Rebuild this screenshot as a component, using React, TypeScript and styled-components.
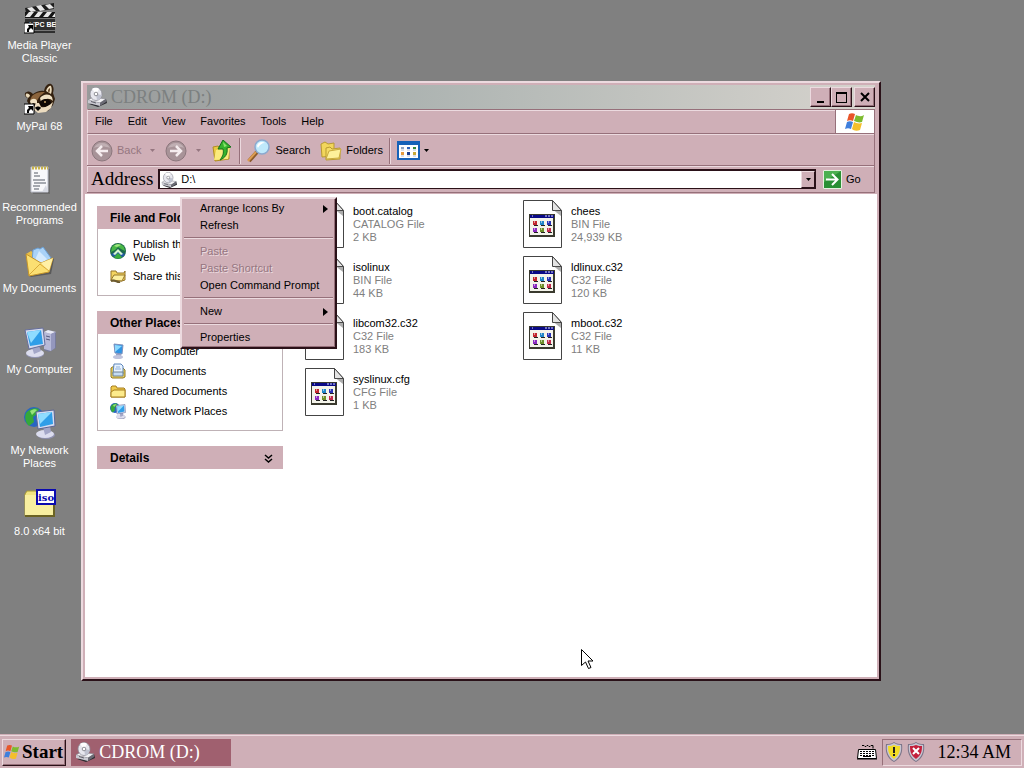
import type { ReactNode } from 'react';
import styled, { createGlobalStyle } from 'styled-components';

const GlobalStyle = createGlobalStyle`
  :root {
    --face: #cfafb7;
    --face-light: #ecdadf;
    --face-shadow: #96707a;
    --face-dark: #2a1118;
    --text-disabled: #957680;
    --ui-font: 'Liberation Sans', Arial, sans-serif;
    --serif-font: 'Liberation Serif', 'Times New Roman', serif;
  }

  * {
    box-sizing: border-box;
  }

  body {
    margin: 0;
    background-color: #808080;
    color: #000;
    font-family: var(--ui-font);
    font-size: 11px;
    line-height: 13px;
  }

  button,
  input {
    font: inherit;
    color: inherit;
    margin: 0;
    padding: 0;
    border: 0;
    background: none;
  }

  a {
    color: inherit;
    text-decoration: none;
  }

  ul {
    list-style: none;
    margin: 0;
    padding: 0;
  }

  svg {
    display: block;
    flex-shrink: 0;
  }
`;

/* ---------- Icons ---------- */

const ShortcutArrow = () => (
  <g>
    <path d="M0 21h10v10H0z" fill="#fff" stroke="#000" strokeWidth="1" />
    <path d="M4 23h5v5l-2-2-2 2v2H3v-3l2-2z" fill="#000" />
  </g>
);

const MediaPlayerIcon = () => (
  <svg width="32" height="32" viewBox="0 0 32 32" aria-hidden="true">
    <path d="M1 6 30 1v6L2 11z" fill="#1c1c1c" />
    <path d="m3 6 5-1 4 4-5 1zM12 4l5-1 4 5-5 1zM21 3l5-1 4 4-5 1z" fill="#e6e6e6" />
    <path d="M1 10h30v21H1z" fill="#2f2f2f" />
    <path d="M1 10h30v6H1z" fill="#151515" />
    <path d="m5 10-4 5h5l4-5zM14 10l-4 5h5l4-5zM23 10l-4 5h5l4-5zM31 11l-3 4h3z" fill="#e6e6e6" />
    <path d="M1 16.500h30M1 28.500h30" stroke="#777" />
    <text x="5" y="25" fontSize="7" fontWeight="700" fill="#fff" fontFamily="Liberation Sans">
      MPC BE
    </text>
    <ShortcutArrow />
  </svg>
);

const RaccoonIcon = () => (
  <svg width="32" height="32" viewBox="0 0 32 32" aria-hidden="true">
    <path d="M20 8c1-5 4-8 7-7 3 2 3 6 2 9l2 6-2 6-5 6-8 1-8-2-5-9 1-3c-4-1-4-6-1-6 2-1 4 0 6 2 3-2 7-4 11-3z" fill="#34210f" />
    <path d="M22 8c1-4 4-6 5-5 1 2 1 5 0 8zM2 11c1-1 4 0 4 2l-2 2c-2-1-3-3-2-4z" fill="#e9dabb" />
    <path d="M24 8c0-2 2-3 2-3s0 3-1 5z" fill="#5c3c1d" />
    <path d="M8 13c4-4 9-4 13-4l-5 4-4 6-6-2z" fill="#8b643c" />
    <path d="M16 15c3-4 9-5 12-1l1 4c-3-3-8-3-12 1zM6 18c2-3 6-3 7 0v3c-2-1-5-1-6 1z" fill="#efe1c4" />
    <path d="M15 20c3-5 10-5 12-1 0 4-6 6-10 4zM7 22c1-2 4-2 5 0l-1 2H8z" fill="#0e0805" />
    <path d="M12 20h3l2 4c4 1 8-1 12-5l-2 6-5 4-8 1-5-4z" fill="#ecdcc0" />
    <circle cx="21" cy="19" r="1" fill="#c7a066" />
    <path d="M11 25c1-2 5-2 6 0l-3 3z" fill="#000" />
    <ShortcutArrow />
  </svg>
);

const NotepadIcon = () => (
  <svg width="32" height="32" viewBox="0 0 32 32" aria-hidden="true">
    <path d="M9 5h17v25H9z" fill="#555" opacity=".5" />
    <path d="M7 3h17v25H7z" fill="#f8f8fb" stroke="#b9bcc8" />
    <path d="M8 4h16" stroke="#c9b44e" strokeWidth="3" strokeDasharray="2 1" />
    <path d="M10 9h4M10 12h6M9 16h12M10 19h12M9 22h7M10 25h5" stroke="#555a66" />
    <path d="M22 21l2 7h-6z" fill="#d7d9e2" />
  </svg>
);

const DocumentsIcon = () => (
  <svg width="32" height="32" viewBox="0 0 32 32" aria-hidden="true">
    <path d="m5 31 20-4 4-14 1 1-3 15-20 3z" fill="#333" opacity=".5" />
    <path d="M2 9l5-3 3 2 4 6-9 14z" fill="#e8bd47" />
    <path d="m9 5 5-2 2 1 3-2 8 11-7 10-12-6z" fill="#a9d2f7" stroke="#6b9fd4" />
    <path d="m15 6 8 8-6 6-6-5z" fill="#d4eafd" />
    <path d="M2 9l15 9 12-5-4 14-20 4z" fill="#fbdf72" stroke="#c4942a" />
    <path d="m17 18 12-5-4 13z" fill="#fff0a6" />
    <path d="m5 30 11-11 9 7" fill="none" stroke="#d9aa3a" />
  </svg>
);

type ComputerIconProps = {
  size?: number;
};

const ComputerIcon = ({ size = 32 }: ComputerIconProps) => (
  <svg width={size} height={size} viewBox="0 0 32 32" aria-hidden="true">
    <path d="m20 6 4-2 8 2v16l-7 4-5-2z" fill="#777b9a" />
    <path d="m20 6 7 2v17l-7-2z" fill="#b7bad8" />
    <path d="m20 6 4-2 8 2-5 2z" fill="#e9eaf6" />
    <path d="m27 8 4-2v16l-4 3z" fill="#9497bd" />
    <path d="M22 10l4 1M22 13l4 1" stroke="#555a80" />
    <ellipse cx="11" cy="28" rx="9" ry="4" fill="#9395b4" />
    <ellipse cx="11" cy="27" rx="9" ry="4" fill="#dcddee" />
    <path d="m8 21 7-1 2 5-7 3z" fill="#a4a7c8" />
    <path d="m1 4 18-2 2 17L5 23z" fill="#d6dcf0" stroke="#666e9c" />
    <path d="m3 6 14-2 2 14L6 20z" fill="#2f9ee8" />
    <path d="m3 6 14-2-10 13z" fill="#8fdcff" />
  </svg>
);

const NetworkIcon = ({ size = 32 }: ComputerIconProps) => (
  <svg width={size} height={size} viewBox="0 0 32 32" aria-hidden="true">
    <circle cx="10" cy="10" r="10" fill="#2765c4" />
    <path d="M2 6c3-4 9-6 13-4l-2 5-4 3 1 5-5 4c-3-3-5-8-3-13z" fill="#35a83a" />
    <path d="M6 4c3-2 6-2 7-1L8 8z" fill="#96e27a" />
    <ellipse cx="22" cy="28" rx="9" ry="4" fill="#8f91b0" />
    <ellipse cx="21" cy="27" rx="9" ry="4" fill="#dcddee" />
    <path d="m19 20 7-1 1 6-6 3z" fill="#a4a7c8" />
    <path d="m12 5 18-2 1 16-17 3z" fill="#d6dcf0" stroke="#5d6594" />
    <path d="m14 7 14-2 1 12-13 3z" fill="#2f9ee8" />
    <path d="m14 7 14-2-12 12z" fill="#8fdcff" />
  </svg>
);

const IsoIcon = () => (
  <svg width="32" height="32" viewBox="0 0 32 32" aria-hidden="true">
    <path d="M1 6 3 3h9l2 3h16v22H1z" fill="#f1e481" stroke="#a79a37" />
    <path d="M1 7h28v20H1z" fill="#f8efa0" />
    <path d="M1 28h29V10" fill="none" stroke="#6b6323" strokeWidth="2" />
    <path d="M13 2h18v14H13z" fill="#fff" stroke="#0a0ab0" strokeWidth="2" />
    <text x="14" y="13" fontSize="10" fontWeight="700" fill="#0a0ab0" fontFamily="DejaVu Serif">
      iso
    </text>
  </svg>
);

const DriveIcon = ({ size = 20 }: ComputerIconProps) => (
  <svg width={size} height={size} viewBox="0 0 20 20" aria-hidden="true">
    <path d="m2 17 9 3 9-4-1-4z" fill="#2b2b30" />
    <path d="m1 13 5-3 13 2-6 4z" fill="#f2f2f5" stroke="#8b8b94" strokeWidth=".7" />
    <path d="m1 13 12 3v3L1 16z" fill="#c9c9d1" />
    <path d="m13 16 6-4v3l-6 4z" fill="#6a6a74" />
    <ellipse cx="9" cy="7" rx="6" ry="6.5" fill="#e7e7ee" stroke="#8d8d98" strokeWidth=".8" />
    <path d="M9 7 5 2c3-2 6-1 7 0z" fill="#fff" />
    <path d="m9 7 6 1c-1 3-3 5-5 5z" fill="#bfc2d0" />
    <circle cx="9" cy="7" r="1.8" fill="#fff" stroke="#77777f" strokeWidth=".8" />
    <path d="M4 14.500l5 1.500" stroke="#5f5f68" />
  </svg>
);

type RoundArrowProps = {
  flipped?: boolean;
};

const RoundArrowIcon = ({ flipped }: RoundArrowProps) => (
  <svg width="22" height="22" viewBox="0 0 22 22" aria-hidden="true">
    <circle cx="11" cy="11" r="10" fill="#a89398" stroke="#8c777d" />
    <path d="M3 8a9 9 0 0 1 16 0c-5-2-11-2-16 0z" fill="#c0afb3" />
    <path
      d={flipped ? 'M5 11h11M11 6l5 5-5 5' : 'M17 11H6M11 6l-5 5 5 5'}
      fill="none"
      stroke="#f5ecee"
      strokeWidth="2.500"
    />
  </svg>
);

const UpFolderIcon = () => (
  <svg width="22" height="22" viewBox="0 0 22 22" aria-hidden="true">
    <path d="m2 7 5-1 2 2 9-1v12L4 21z" fill="#e9c841" stroke="#b08e22" />
    <path d="m3 20 2-10 14-3-2 12z" fill="#fbea7d" />
    <path d="m12 0 8 7-4 1c1 6-2 10-7 12 3-4 4-7 3-11L7 9z" fill="#36b32d" stroke="#16701a" />
    <path d="m12 2 4 4-3 1z" fill="#8ce56f" />
  </svg>
);

const SearchIcon = () => (
  <svg width="24" height="24" viewBox="0 0 24 24" aria-hidden="true">
    <path d="m2 22 8-9" stroke="#8b5a2a" strokeWidth="4" />
    <path d="m1 22 8-9" stroke="#dc9c52" strokeWidth="2" />
    <circle cx="15" cy="8" r="7" fill="#bfe9fb" stroke="#8ba9cf" strokeWidth="1.500" />
    <path d="M10 7c1-4 5-5 8-3-3 0-6 2-7 5z" fill="#fff" />
  </svg>
);

const FoldersIcon = () => (
  <svg width="22" height="20" viewBox="0 0 22 20" aria-hidden="true">
    <path d="M1 3 5 1l3 2 6-1v13L2 16z" fill="#f2d65c" stroke="#b99a32" />
    <path d="m6 7 4-1 2 2 8-1v11L6 19z" fill="#f5dc66" stroke="#b99a32" />
    <path d="m6 18 3-8 12-2-2 9z" fill="#fdf09a" stroke="#c9aa3e" />
  </svg>
);

const ViewsIcon = () => (
  <svg width="23" height="19" viewBox="0 0 23 19" aria-hidden="true">
    <path d="M0 0h23v19H0z" fill="#1662b8" />
    <path d="M2 4h19v13H2z" fill="#fff" />
    <path d="M4 6h3v2H4z" fill="#8fa3c0" />
    <path d="M10 6h3v2h-3z" fill="#2c62bb" />
    <path d="M16 6h3v2h-3z" fill="#368a39" />
    <path d="M4 11h3v3H4z" fill="#e59a3c" />
    <path d="M10 11h3v3h-3z" fill="#1c3f91" />
    <path d="M16 11h3v3h-3z" fill="#c8a93a" />
    <path d="M4 9h3M10 9h3M16 9h3M4 15h3M10 15h3M16 15h3" stroke="#b7c2d6" />
  </svg>
);

const GoIcon = () => (
  <svg width="19" height="19" viewBox="0 0 19 19" aria-hidden="true">
    <path d="M1 0h17l1 1v17l-1 1H1l-1-1V1z" fill="#e5f2df" />
    <path d="M1 1h17v17H1z" fill="#2a8f35" />
    <path d="M1 1h17L1 12z" fill="#4bb050" />
    <path d="M3 9.500h11M9 4l5.500 5.500L9 15" fill="none" stroke="#fff" strokeWidth="2" />
  </svg>
);

const FlagIcon = ({ size = 20 }: ComputerIconProps) => (
  <svg width={size} height={size} viewBox="0 0 20 20" aria-hidden="true">
    <path d="M4 2c2-1 4-1 6 0L8 9C6 8 4 8 2 9z" fill="#e8562a" />
    <path d="M11 3c2 1 5 2 8 0l-2 7c-3 1-5 0-8-1z" fill="#7dbb2f" />
    <path d="M2 10c2-1 4-1 6 0l-2 7c-2-1-4-1-6 0z" fill="#3f7fdc" />
    <path d="M9 10c2 1 5 2 8 1l-2 7c-3 1-6 1-8-1z" fill="#f4bf2b" />
  </svg>
);

const GlobeIcon = () => (
  <svg width="16" height="16" viewBox="0 0 16 16" aria-hidden="true">
    <circle cx="8" cy="8" r="8" fill="#1d6b4a" />
    <path d="M2 4c3-4 9-4 12 0l1 4-4-2-3-2-3 3-4 2z" fill="#49b846" />
    <path d="M4 3c2-2 5-2 7-1L7 4z" fill="#a2e67f" />
    <path d="M1 11c2 4 11 6 14 0l-7-3z" fill="#2357a8" />
    <path d="m8 6 5 5-2 1-3-3-3 3-2-1z" fill="#d9f7cf" />
    <path d="m8 10 4 4c-2 2-6 2-8 0z" fill="#38ad3c" />
  </svg>
);

const SharedFolderIcon = () => (
  <svg width="16" height="16" viewBox="0 0 16 16" aria-hidden="true">
    <path d="M1 3h5l1 2h7l1-2v9l-3 1H1z" fill="#f4d560" stroke="#96762a" />
    <path d="m1 12 3-5h11l-3 6z" fill="#fdf0a0" stroke="#96762a" />
    <path d="M1 13c4-2 6 2 9 1" fill="none" stroke="#6b5a30" strokeWidth="2" />
  </svg>
);

const PaperFolderIcon = () => (
  <svg width="16" height="16" viewBox="0 0 16 16" aria-hidden="true">
    <path d="m1 5 3-2 8 1 3 3v7l-2 1H2l-1-1z" fill="#ecd25e" stroke="#927a26" />
    <path d="M4 1h7l2 2v8H3z" fill="#eaf4ff" stroke="#5d86bb" />
    <path d="M6 4h4M5 6h6" stroke="#8fb1da" />
    <path d="M3 9h10v4H3z" fill="#c4dcf3" stroke="#6f8294" />
  </svg>
);

const FolderIcon = () => (
  <svg width="16" height="16" viewBox="0 0 16 16" aria-hidden="true">
    <path d="M1 4l1-1h4l1 2h7l1 1v8H1z" fill="#f0cb4c" stroke="#a77f20" />
    <path d="M1 14V9l3-2h11v7z" fill="#fdeb8c" stroke="#a77f20" />
  </svg>
);

const MonitorIcon = () => (
  <svg width="16" height="16" viewBox="0 0 16 16" aria-hidden="true">
    <path d="m4 1 9 1-1 9-7-1z" fill="#2f94e3" stroke="#7f91bd" />
    <path d="m5 2 7 1-7 6z" fill="#8bd9ff" />
    <path d="M6 11h5v2H6z" fill="#9ca1c4" />
    <ellipse cx="8" cy="14" rx="5" ry="2" fill="#bfc3dc" />
  </svg>
);

const FileIcon = () => (
  <svg width="39" height="48" viewBox="0 0 39 48" aria-hidden="true">
    <path d="M.5.5h29l9 10v37H.5z" fill="#fff" stroke="#444" />
    <path d="M29.500.5v10h9z" fill="#e4e4e4" stroke="#444" />
    <path d="m31 10.500 7 .5v5z" fill="#777" opacity=".6" />
    <path d="M6 14h26v23H6z" fill="#3a3a2e" />
    <path d="M7 15h24v3H7z" fill="#0a0a86" />
    <path d="M9 16h1M22 16h2M25 16h2M28 16h2" stroke="#dfe2ff" />
    <path d="M7 18h23v17H7z" fill="#f4f4ea" />
    <path d="M10 21h4v4h-4z" fill="#c2262d" />
    <path d="M17 21h4v4h-4z" fill="#1f86c9" />
    <path d="M24 21h4v4h-4z" fill="#2a35b8" />
    <path d="M10 28h4v4h-4z" fill="#8a2ac0" />
    <path d="M17 28h4v4h-4z" fill="#6c8f2a" />
    <path d="M24 28h4v4h-4z" fill="#c22a4a" />
    <path d="M11 25.500h4M18 25.500h4M25 25.500h4M11 32.500h4M18 32.500h4M25 32.500h4" stroke="#222" />
    <path d="M11 22h1M18 22h1M25 22h1M11 29h1M18 29h1M25 29h1" stroke="#fff" />
  </svg>
);

type ShieldIconProps = {
  alert?: boolean;
};

const ShieldIcon = ({ alert }: ShieldIconProps) => (
  <svg width="18" height="20" viewBox="0 0 18 20" aria-hidden="true">
    <path d="M9 0c3 2 5 2 8 2 1 8-1 14-8 18C2 16 0 10 1 2c3 0 5 0 8-2z" fill="#7b7488" />
    <path d="M9 1c2 1 4 2 7 2 1 6-1 12-7 16C3 15 1 9 2 3c3 0 5-1 7-2z" fill="#c9c6d2" />
    <path d="M9 3c2 1 4 1 6 1 0 6-1 9-6 13-5-4-6-7-6-13 2 0 4 0 6-1z" fill={alert ? '#c3203c' : '#f2dc25'} />
    {alert ? (
      <path d="m6 6 6 6M12 6l-6 6" stroke="#fff" strokeWidth="2" />
    ) : (
      <path d="M9 5v6M9 12v2" stroke="#222" strokeWidth="2" />
    )}
  </svg>
);

const KeyboardIcon = () => (
  <svg width="20" height="16" viewBox="0 0 20 16" aria-hidden="true">
    <path d="M5 1.500h2l1 1h1l1-1h1l1 1h1l1-1h2v3" fill="none" stroke="#000" />
    <path d="M1.500 5.500h17l1 9H.5z" fill="#fff" stroke="#000" />
    <path d="M3 7.500h14M3 9.500h14M3 11.500h14" stroke="#000" strokeDasharray="2 1" />
    <path d="M6 12.500h8M0 15h20" stroke="#000" />
  </svg>
);

const ChevronsIcon = () => (
  <svg width="9" height="9" viewBox="0 0 9 9" aria-hidden="true">
    <path d="m1 1 3.500 3L8 1M1 5l3.500 3L8 5" fill="none" stroke="#000" strokeWidth="1.500" />
  </svg>
);

const SubmenuArrow = () => (
  <svg width="5" height="8" viewBox="0 0 5 8" aria-hidden="true">
    <path d="M0 0v8l5-4z" fill="#000" />
  </svg>
);

const DownArrow = () => (
  <svg width="5" height="3" viewBox="0 0 5 3" aria-hidden="true">
    <path d="M0 0h5L2.500 3z" fill="currentColor" />
  </svg>
);

/* ---------- Data ---------- */

const shortcuts: { label: string; icon: ReactNode }[] = [
  { label: 'Media Player Classic', icon: <MediaPlayerIcon /> },
  { label: 'MyPal 68', icon: <RaccoonIcon /> },
  { label: 'Recommended Programs', icon: <NotepadIcon /> },
  { label: 'My Documents', icon: <DocumentsIcon /> },
  { label: 'My Computer', icon: <ComputerIcon /> },
  { label: 'My Network Places', icon: <NetworkIcon /> },
  { label: '8.0 x64 bit', icon: <IsoIcon /> },
];

const menus = ['File', 'Edit', 'View', 'Favorites', 'Tools', 'Help'];

const files = [
  { name: 'boot.catalog', type: 'CATALOG File', size: '2 KB' },
  { name: 'chees', type: 'BIN File', size: '24,939 KB' },
  { name: 'isolinux', type: 'BIN File', size: '44 KB' },
  { name: 'ldlinux.c32', type: 'C32 File', size: '120 KB' },
  { name: 'libcom32.c32', type: 'C32 File', size: '183 KB' },
  { name: 'mboot.c32', type: 'C32 File', size: '11 KB' },
  { name: 'syslinux.cfg', type: 'CFG File', size: '1 KB' },
];

const fileTasks = [
  { label: 'Publish this folder to the Web', icon: <GlobeIcon /> },
  { label: 'Share this folder', icon: <SharedFolderIcon /> },
];

const places = [
  { label: 'My Computer', icon: <MonitorIcon /> },
  { label: 'My Documents', icon: <PaperFolderIcon /> },
  { label: 'Shared Documents', icon: <FolderIcon /> },
  { label: 'My Network Places', icon: <NetworkIcon size={16} /> },
];

/* ---------- Sections ---------- */

const ExplorerWindow = () => (
  <Window>
    <TitleBar>
      <DriveIcon />
      <Title>CDROM (D:)</Title>
      <TitleButton aria-label="Minimize">
        <svg width="12" height="12" viewBox="0 0 12 12">
          <path d="M2 10h7v2H2z" />
        </svg>
      </TitleButton>
      <TitleButton aria-label="Maximize">
        <svg width="12" height="12" viewBox="0 0 12 12">
          <path d="M0 1h11v11H0zM1 3v8h9V3z" fillRule="evenodd" />
        </svg>
      </TitleButton>
      <TitleButton aria-label="Close" $spaced>
        <svg width="12" height="12" viewBox="0 0 12 12">
          <path d="m2 2 8 8M10 2l-8 8" stroke="#000" strokeWidth="2" />
        </svg>
      </TitleButton>
    </TitleBar>

    <MenuBar>
      <Menus>
        {menus.map((menu) => (
          <button key={menu}>{menu}</button>
        ))}
      </Menus>
      <Brand>
        <FlagIcon />
      </Brand>
    </MenuBar>

    <Toolbar>
      <ToolButton disabled>
        <RoundArrowIcon />
        Back
      </ToolButton>
      <DropButton disabled aria-label="Back history">
        <DownArrow />
      </DropButton>
      <ToolButton disabled aria-label="Forward">
        <RoundArrowIcon flipped />
      </ToolButton>
      <DropButton disabled aria-label="Forward history">
        <DownArrow />
      </DropButton>
      <ToolButton aria-label="Up">
        <UpFolderIcon />
      </ToolButton>
      <ToolSeparator />
      <ToolButton>
        <SearchIcon />
        Search
      </ToolButton>
      <ToolButton $spaced>
        <FoldersIcon />
        Folders
      </ToolButton>
      <ToolSeparator />
      <ToolButton aria-label="Views">
        <ViewsIcon />
        <DownArrow />
      </ToolButton>
    </Toolbar>

    <AddressBar>
      <AddressLabel htmlFor="address">Address</AddressLabel>
      <AddressField>
        <DriveIcon size={16} />
        <AddressInput id="address" defaultValue="D:\" />
        <AddressDrop aria-label="Show addresses">
          <DownArrow />
        </AddressDrop>
      </AddressField>
      <GoButton>
        <GoIcon />
        Go
      </GoButton>
    </AddressBar>

    <Content>
      <Sidebar>
        <section>
          <PanelHeader>File and Folder Tasks</PanelHeader>
          <PanelBody>
            {fileTasks.map((task) => (
              <PanelLink href="#" key={task.label}>
                {task.icon}
                {task.label}
              </PanelLink>
            ))}
          </PanelBody>
        </section>
        <section>
          <PanelHeader>Other Places</PanelHeader>
          <PanelBody>
            {places.map((place) => (
              <PanelLink href="#" key={place.label}>
                {place.icon}
                {place.label}
              </PanelLink>
            ))}
          </PanelBody>
        </section>
        <section>
          <PanelHeader as="button">
            Details
            <ChevronsIcon />
          </PanelHeader>
        </section>
      </Sidebar>

      <Files>
        {files.map((file) => (
          <File key={file.name}>
            <FileIcon />
            <div>
              <div>{file.name}</div>
              <FileMeta>{file.type}</FileMeta>
              <FileMeta>{file.size}</FileMeta>
            </div>
          </File>
        ))}
      </Files>
    </Content>
  </Window>
);

const FolderMenu = () => (
  <ContextMenu role="menu">
    <MenuItem role="menuitem">
      Arrange Icons By
      <SubmenuArrow />
    </MenuItem>
    <MenuItem role="menuitem">Refresh</MenuItem>
    <MenuSeparator />
    <MenuItem role="menuitem" disabled>
      Paste
    </MenuItem>
    <MenuItem role="menuitem" disabled>
      Paste Shortcut
    </MenuItem>
    <MenuItem role="menuitem">Open Command Prompt</MenuItem>
    <MenuSeparator />
    <MenuItem role="menuitem">
      New
      <SubmenuArrow />
    </MenuItem>
    <MenuSeparator />
    <MenuItem role="menuitem">Properties</MenuItem>
  </ContextMenu>
);

const App = () => {
  return (
    <Screen>
      <GlobalStyle />
      <Desktop>
        <Shortcuts>
          {shortcuts.map((shortcut) => (
            <Shortcut key={shortcut.label}>
              {shortcut.icon}
              <span>{shortcut.label}</span>
            </Shortcut>
          ))}
        </Shortcuts>
        <ExplorerWindow />
        <FolderMenu />
        <Pointer width="13" height="21" viewBox="0 0 13 21" aria-hidden="true">
          <path d="M.5.5v16l4-3.500 3 6.500 2.500-1-3-6.500h5z" fill="#fff" stroke="#000" />
        </Pointer>
      </Desktop>

      <Taskbar>
        <StartButton>
          <FlagIcon size={16} />
          Start
        </StartButton>
        <TaskButton>
          <DriveIcon />
          CDROM (D:)
        </TaskButton>
        <KeyboardIcon />
        <Tray>
          <ShieldIcon />
          <ShieldIcon alert />
          <Clock>12:34 AM</Clock>
        </Tray>
      </Taskbar>
    </Screen>
  );
};

export default App;

/* ---------- Styles ---------- */

const Screen = styled.div`
  display: flex;
  flex-direction: column;
  min-height: 100vh;
`;

const Desktop = styled.main`
  position: relative;
  flex: 1;
`;

const Shortcuts = styled.ul`
  width: 79px;
`;

const Shortcut = styled.li`
  display: flex;
  flex-direction: column;
  align-items: center;
  gap: 5px;
  height: 81px;
  padding-top: 2px;
  color: #fff;
  text-align: center;
`;

const Window = styled.section`
  position: absolute;
  inset: 81px 143px 53px 81px;
  display: flex;
  flex-direction: column;
  padding: 2px;
  background-color: var(--face);
  border: 2px solid;
  border-color: var(--face-light) var(--face-dark) var(--face-dark) var(--face-light);
`;

const TitleBar = styled.header`
  display: flex;
  align-items: center;
  height: 24px;
  margin: 0 2px;
  background: linear-gradient(to right, #999b9b, #acb3b1 40%, #d6d3cd);
`;

const Title = styled.h1`
  flex: 1;
  margin: 0 0 0 4px;
  color: #7c8080;
  font-family: var(--serif-font);
  font-weight: 400;
  font-size: 18px;
  line-height: 22px;
`;

const TitleButton = styled.button<{ $spaced?: boolean }>`
  display: flex;
  align-items: center;
  justify-content: center;
  width: 21px;
  height: 20px;
  margin-left: ${({ $spaced }) => ($spaced ? '2px' : '0')};
  background-color: var(--face);
  border: 1px solid;
  border-color: var(--face-light) var(--face-dark) var(--face-dark) var(--face-light);
  box-shadow: inset -1px -1px var(--face-shadow);
`;

const MenuBar = styled.nav`
  display: flex;
  height: 25px;
  margin: 0 2px;
  border: 1px solid var(--face-shadow);
  border-left-color: var(--face-light);
  box-shadow: inset 0 1px var(--face-light);
`;

const Menus = styled.div`
  flex: 1;
  display: flex;
  align-items: center;
  gap: 15px;
  padding-left: 7px;
`;

const Brand = styled.div`
  display: flex;
  align-items: center;
  justify-content: center;
  width: 39px;
  background-color: #fff;
  border-left: 1px solid var(--face-shadow);
`;

const Toolbar = styled.div`
  display: flex;
  align-items: center;
  height: 32px;
  margin: 0 2px;
  padding: 2px 4px 0;
  border: solid var(--face-shadow);
  border-width: 0 1px 1px 0;
  box-shadow: inset 1px 1px var(--face-light);
`;

const ToolButton = styled.button<{ $spaced?: boolean }>`
  display: flex;
  align-items: center;
  gap: 4px;
  margin-left: ${({ $spaced }) => ($spaced ? '10px' : '0')};

  &:disabled {
    color: var(--text-disabled);
  }
`;

const DropButton = styled.button`
  width: 24px;
  padding: 0 9px;

  &:disabled {
    color: var(--text-disabled);
  }
`;

const ToolSeparator = styled.div`
  width: 2px;
  height: 26px;
  margin: 0 6px;
  border-left: 1px solid var(--face-shadow);
  border-right: 1px solid var(--face-light);
`;

const AddressBar = styled.div`
  display: flex;
  align-items: center;
  height: 27px;
  margin: 0 2px;
  padding-left: 4px;
  border: solid var(--face-shadow);
  border-width: 0 1px 1px 0;
  box-shadow: inset 1px 1px var(--face-light);
`;

const AddressLabel = styled.label`
  margin-right: 5px;
  font-family: var(--serif-font);
  font-size: 19px;
  line-height: 22px;
`;

const AddressField = styled.div`
  flex: 1;
  display: flex;
  align-items: center;
  height: 20px;
  padding-left: 1px;
  background-color: #fff;
  border: solid var(--face-dark);
  border-width: 2px 1px 1px 2px;
`;

const AddressInput = styled.input`
  flex: 1;
  min-width: 0;
  margin-left: 4px;
  outline: none;
`;

const AddressDrop = styled.button`
  display: flex;
  align-items: center;
  justify-content: center;
  width: 14px;
  height: 17px;
  background-color: var(--face);
  border: 1px solid;
  border-color: var(--face-light) var(--face-dark) var(--face-dark) var(--face-light);
`;

const GoButton = styled.button`
  display: flex;
  align-items: center;
  gap: 4px;
  width: 51px;
  margin-left: 7px;
`;

const Content = styled.div`
  flex: 1;
  display: flex;
  margin-top: 1px;
  background-color: #fff;
`;

const Sidebar = styled.aside`
  flex-shrink: 0;
  display: flex;
  flex-direction: column;
  gap: 15px;
  width: 198px;
  padding: 12px 0 0 12px;
`;

const PanelHeader = styled.h2`
  display: flex;
  align-items: center;
  justify-content: space-between;
  width: 100%;
  height: 23px;
  margin: 0;
  padding: 2px 10px 0 13px;
  background-color: var(--face);
  font-size: 12px;
  font-weight: 700;
`;

const PanelBody = styled.div`
  display: flex;
  flex-direction: column;
  gap: 4px;
  padding: 9px 24px 11px 12px;
  border: 1px solid #bfb2b6;
  border-top: 0;
`;

const PanelLink = styled.a`
  display: flex;
  align-items: center;
  gap: 7px;
  min-height: 16px;
`;

const Files = styled.ul`
  flex: 1;
  display: grid;
  grid-template-columns: repeat(auto-fill, 218px);
  grid-auto-rows: 48px;
  row-gap: 8px;
  align-content: start;
  padding: 6px 0 0 22px;
`;

const File = styled.li`
  display: flex;
  align-items: center;
  gap: 9px;
`;

const FileMeta = styled.div`
  color: #808080;
`;

const ContextMenu = styled.div`
  position: absolute;
  top: 197px;
  left: 180px;
  width: 157px;
  padding: 1px;
  background-color: var(--face);
  border: 2px solid;
  border-color: var(--face-light) var(--face-dark) var(--face-dark) var(--face-light);
  box-shadow: inset -1px -1px var(--face-shadow);
`;

const MenuItem = styled.button`
  display: flex;
  align-items: center;
  justify-content: space-between;
  width: 100%;
  height: 17px;
  padding: 0 6px 0 17px;
  text-align: left;

  &:disabled {
    color: var(--text-disabled);
    text-shadow: 1px 1px var(--face-light);
  }
`;

const MenuSeparator = styled.hr`
  height: 2px;
  margin: 3px 1px 4px;
  border: solid;
  border-width: 1px 0;
  border-color: var(--face-shadow) transparent var(--face-light);
`;

const Pointer = styled.svg`
  position: absolute;
  top: 649px;
  left: 581px;
`;

const Taskbar = styled.footer`
  display: flex;
  align-items: center;
  height: 34px;
  padding: 1px 2px 0;
  background-color: var(--face);
  border-top: 1px solid var(--face);
  box-shadow: inset 0 1px var(--face-light);
  font-family: var(--serif-font);
  line-height: 22px;
`;

const StartButton = styled.button`
  display: flex;
  align-items: center;
  gap: 2px;
  height: 27px;
  padding: 0 2px 0 1px;
  font-size: 19px;
  font-weight: 700;
  border: 1px solid;
  border-color: var(--face-light) var(--face-dark) var(--face-dark) var(--face-light);
  box-shadow: inset -1px -1px var(--face-shadow);
`;

const TaskButton = styled.button`
  display: flex;
  align-items: center;
  gap: 4px;
  width: 160px;
  height: 27px;
  margin: 0 auto 0 5px;
  padding-left: 4px;
  background-color: #a0606f;
  color: #fff;
  font-size: 18px;
`;

const Tray = styled.div`
  display: flex;
  align-items: center;
  gap: 4px;
  height: 27px;
  margin-left: 5px;
  padding: 0 10px 0 2px;
  border: 1px solid;
  border-color: var(--face-shadow) var(--face-light) var(--face-light) var(--face-shadow);
`;

const Clock = styled.time`
  margin-left: 8px;
  font-size: 18px;
`;
